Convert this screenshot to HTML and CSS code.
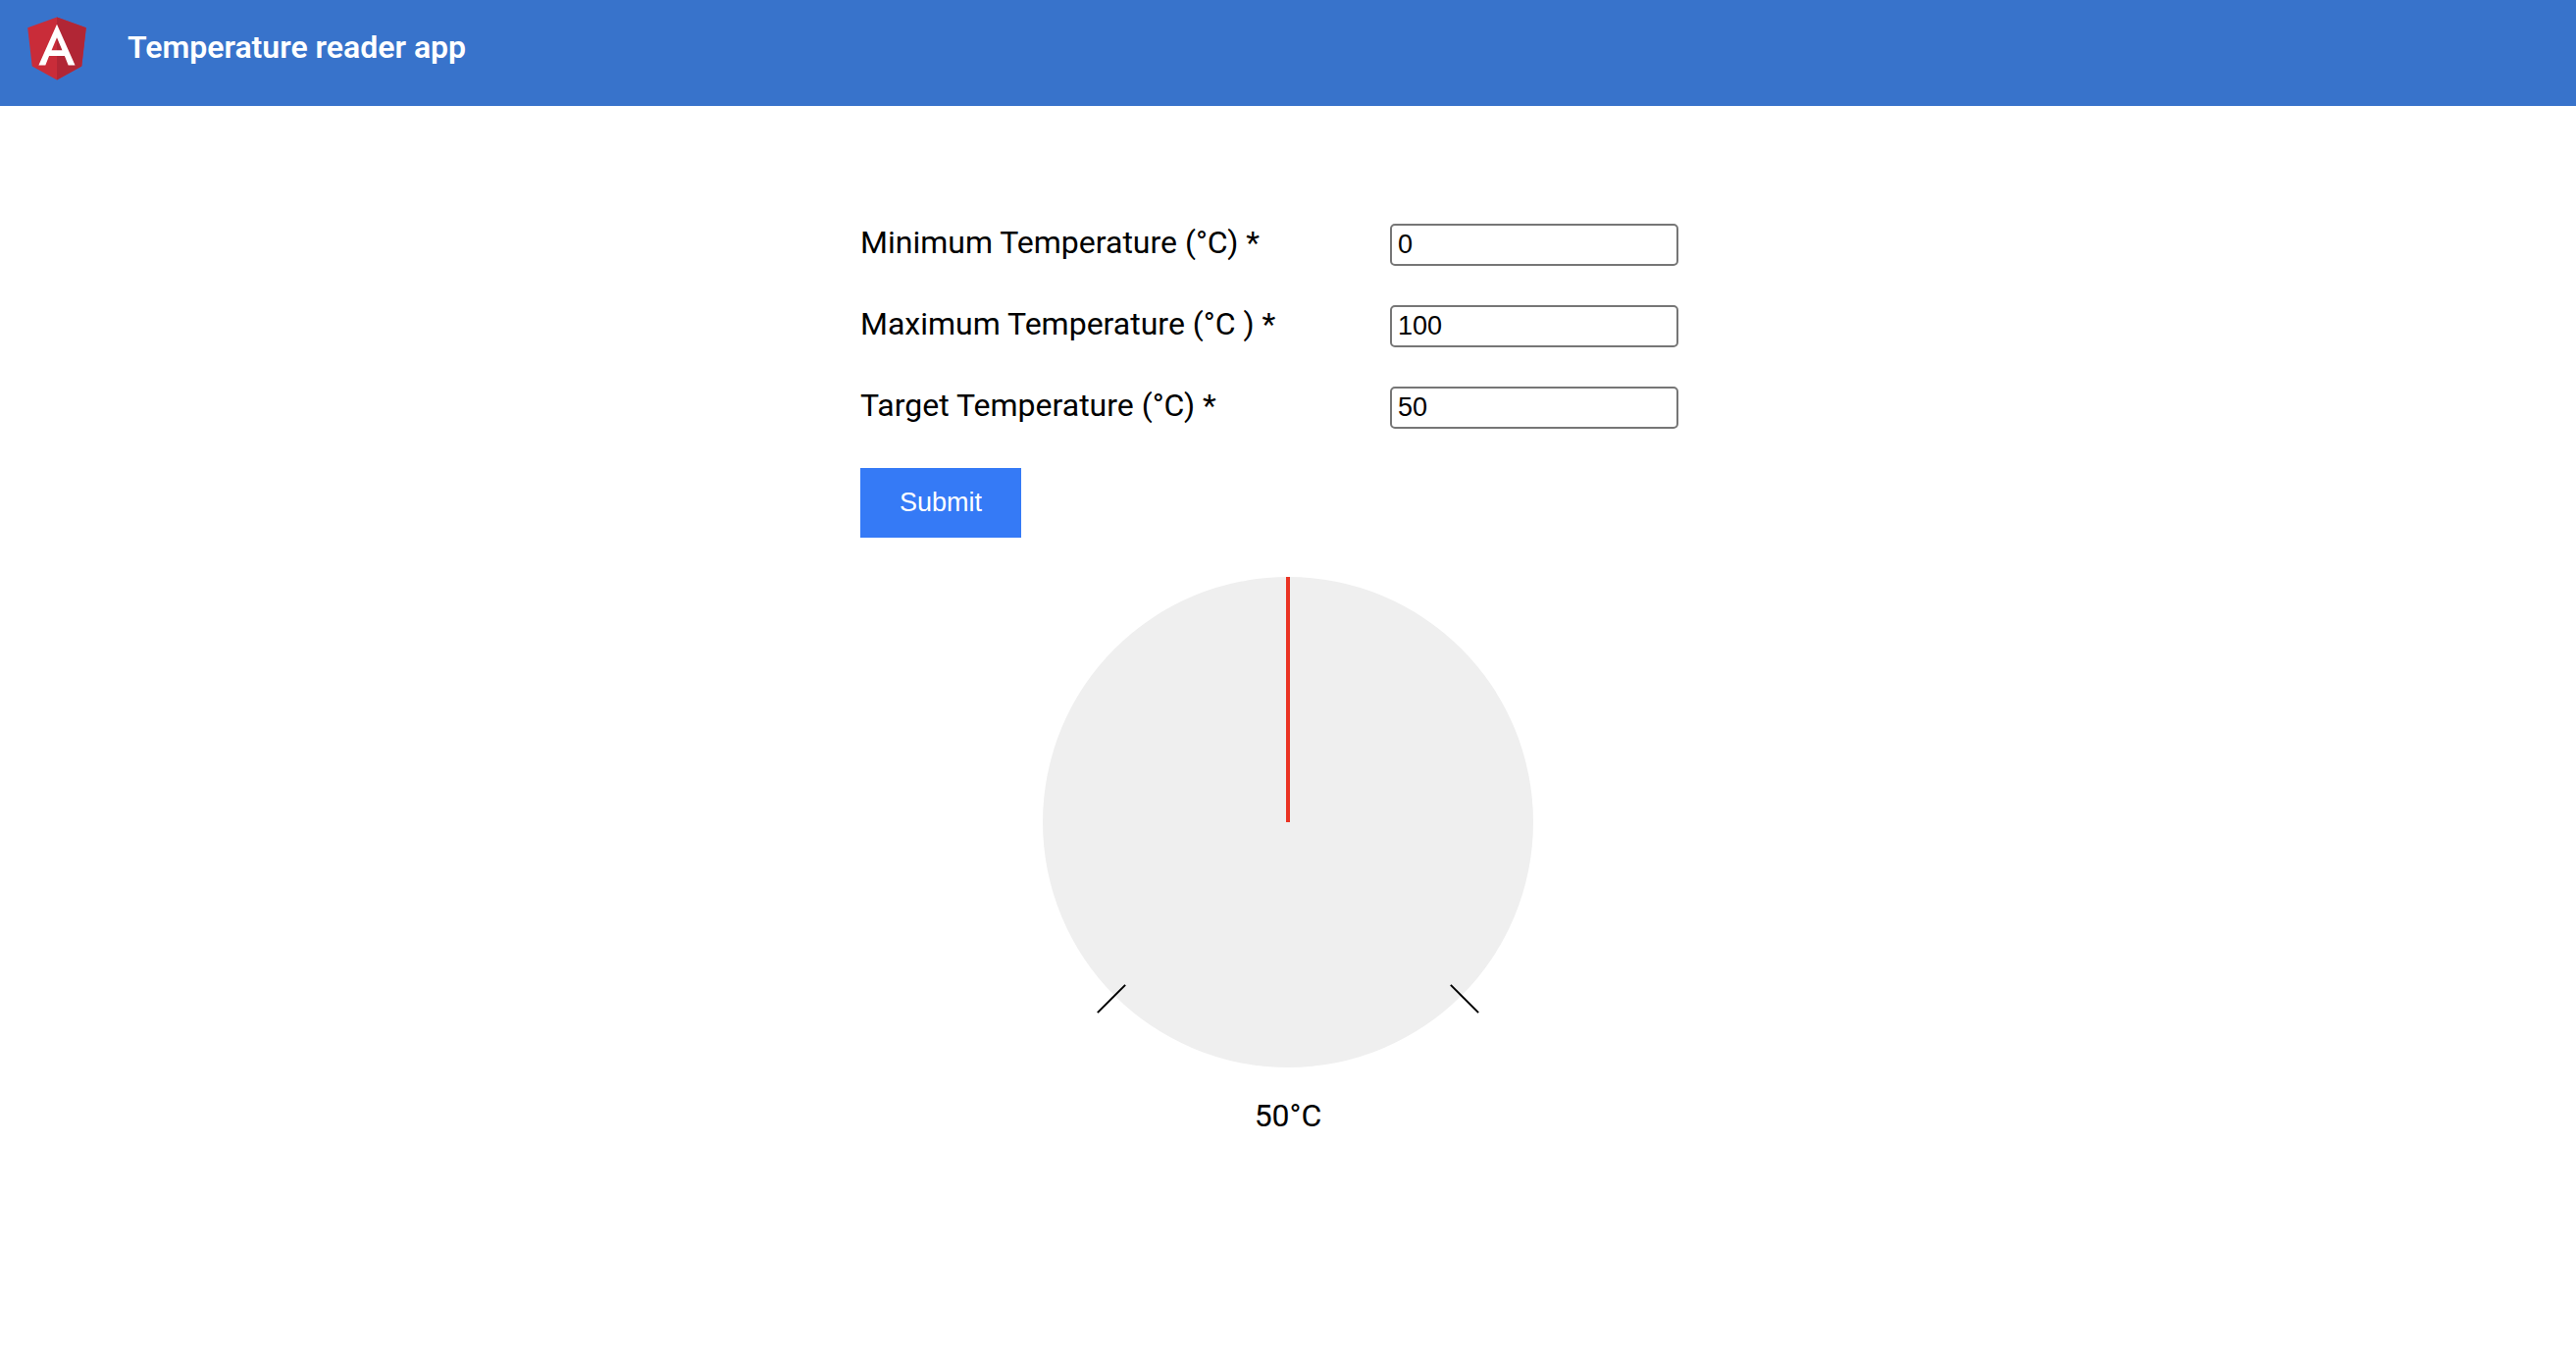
FILE: index.html
```html
<!DOCTYPE html>
<html lang="en">
<head>
  <meta charset="utf-8">
  <meta name="viewport" content="width=device-width, initial-scale=1">
  <title>Temperature reader app</title>
  <link rel="stylesheet" href="styles.css">
</head>
<body>
  <header class="toolbar">
    <svg class="logo" viewBox="0 0 250 250" role="img" aria-label="Angular logo">
      <path class="logo-light" d="M125 30 31.900 63.200l14.200 123.100L125 230l78.900-43.700 14.200-123.100z"/>
      <path class="logo-dark" d="M125 30v22.200-.1V230l78.900-43.700 14.200-123.100z"/>
      <path class="logo-letter" d="M125 52.100 66.800 182.600h21.700l11.700-29.200h49.400l11.700 29.200H183zm17 83.300h-34l17-40.900z"/>
    </svg>
    <span class="title">Temperature reader app</span>
  </header>

  <main class="content">
    <form class="settings">
      <div class="field">
        <label for="min">Minimum Temperature (°C) *</label>
        <input id="min" class="value" type="text" inputmode="numeric" value="0" required>
      </div>
      <div class="field">
        <label for="max">Maximum Temperature (°C ) *</label>
        <input id="max" class="value" type="text" inputmode="numeric" value="100" required>
      </div>
      <div class="field">
        <label for="target">Target Temperature (°C) *</label>
        <input id="target" class="value" type="text" inputmode="numeric" value="50" required>
      </div>
      <button class="submit" type="submit">Submit</button>
    </form>

    <section class="gauge">
      <div class="dial">
        <div class="needle"></div>
        <div class="tick tick-min"></div>
        <div class="tick tick-max"></div>
      </div>
      <output class="reading" for="target">50°C</output>
    </section>
  </main>
</body>
</html>
```
FILE: styles.css
```css
* {
  box-sizing: border-box;
}

body {
  margin: 0;
  background: #fff;
  color: #000;
  font-family: Roboto, "Liberation Sans", sans-serif;
  font-size: 32px;
  line-height: 38px;
}

.toolbar {
  display: flex;
  align-items: center;
  gap: 32px;
  padding: 8px 18px 20px;
  background: #3873cb;
  color: #fff;
}

.logo {
  width: 80px;
  height: 80px;
}

.logo-light {
  fill: #c92c39;
}

.logo-dark {
  fill: #b12635;
}

.logo-letter {
  fill: #fff;
}

.title {
  font-weight: 600;
}

.content {
  display: flex;
  flex-direction: column;
  gap: 40px;
  max-width: 872px;
  margin: 0 auto;
  padding: 120px 0 40px;
}

.settings {
  display: flex;
  flex-direction: column;
  align-items: flex-start;
  gap: 40px;
}

.field {
  display: grid;
  grid-template-columns: 540px 294px;
  align-items: start;
}

.value {
  width: 100%;
  height: 43px;
  padding: 2px 6px;
  border: 2px solid #767676;
  border-radius: 5px;
  background: #fff;
  color: #000;
  font: 27px "Liberation Sans", Arial, sans-serif;
}

.submit {
  padding: 20px 40px;
  border: 0;
  background: #357af6;
  color: #fff;
  font: 27px/31px "Liberation Sans", Arial, sans-serif;
}

.gauge {
  display: flex;
  flex-direction: column;
  align-items: center;
  gap: 30px;
}

.dial {
  position: relative;
  width: 500px;
  height: 500px;
  border-radius: 50%;
  background: #efefef;
}

.needle {
  position: absolute;
  top: 0;
  left: 50%;
  width: 4px;
  height: 50%;
  margin-left: -2px;
  background: #ea3323;
}

.tick {
  position: absolute;
  top: 429px;
  width: 40px;
  height: 2px;
  background: #000;
}

.tick-min {
  left: 50px;
  transform: rotate(-45deg);
}

.tick-max {
  right: 50px;
  transform: rotate(45deg);
}
```
